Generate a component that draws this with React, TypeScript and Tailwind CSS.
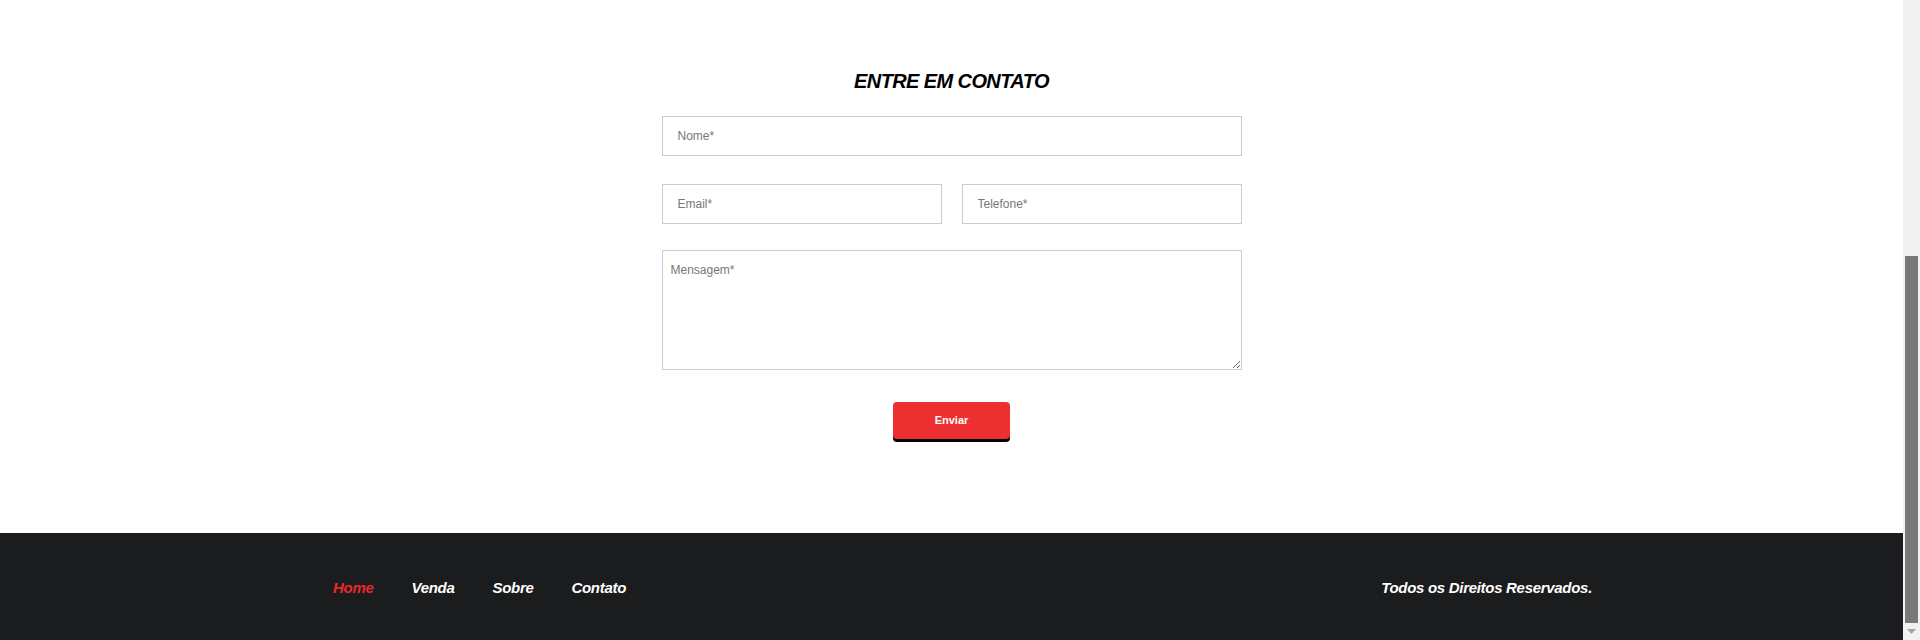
const narrow = "font-['Liberation_Sans_Narrow','Liberation_Sans',Arial,sans-serif]";

const navLinks = [
  { label: 'Home', active: true },
  { label: 'Venda', active: false },
  { label: 'Sobre', active: false },
  { label: 'Contato', active: false },
];

function ContactForm() {
  const field =
    'block w-full h-10 border border-[#cccccc] bg-white px-[15px] text-[12px] text-[#333] placeholder:text-[#777] outline-none';

  return (
    <section className="flex-1 bg-white pt-[65px]">
      <h2 className={`${narrow} text-center text-[20px] leading-8 font-bold italic tracking-[-0.6px] text-black`}>
        ENTRE EM CONTATO
      </h2>
      <form className={`${narrow} mx-auto mt-[19px] w-[580px]`} onSubmit={(e) => e.preventDefault()}>
        <input type="text" placeholder="Nome*" className={field} />
        <div className="mt-7 grid grid-cols-2 gap-5">
          <input type="email" placeholder="Email*" className={field} />
          <input type="tel" placeholder="Telefone*" className={field} />
        </div>
        <textarea
          placeholder="Mensagem*"
          className="mt-[26px] block h-[120px] w-full border border-[#cccccc] bg-white px-2 pt-[10px] text-[12px] text-[#333] placeholder:text-[#777] outline-none"
        />
        <div className="mt-8 flex justify-center">
          <button
            type="submit"
            className="h-[37px] w-[117px] rounded-[4px] bg-[#ec2f31] text-[11px] font-bold text-white shadow-[0_3px_0_#000]"
          >
            Enviar
          </button>
        </div>
      </form>
    </section>
  );
}

function Footer() {
  return (
    <footer className={`${narrow} flex h-[107px] items-center justify-between bg-[#1b1c1e] pl-[333px] pr-[311px] pt-[3px] text-[15px] font-bold italic tracking-[-0.3px]`}>
      <nav className="flex items-center gap-[38px]">
        {navLinks.map((link) => (
          <a
            key={link.label}
            href="#"
            className={link.active ? 'text-[#e62a2c]' : 'text-white'}
          >
            {link.label}
          </a>
        ))}
      </nav>
      <p className="text-white">Todos os Direitos Reservados.</p>
    </footer>
  );
}

function Scrollbar() {
  return (
    <div className="flex w-[17px] flex-col bg-[#f1f1f1]">
      <div className="h-[256px]" />
      <div className="mx-[2px] h-[367px] bg-[#787878]" />
      <div className="flex flex-1 items-center justify-center">
        <svg width="9" height="5" viewBox="0 0 9 5">
          <path d="M0 0h9L4.5 5z" fill="#a3a3a3" />
        </svg>
      </div>
    </div>
  );
}

export default function App() {
  return (
    <div className="flex h-[640px] w-full overflow-hidden bg-white">
      <div className="flex flex-1 flex-col">
        <ContactForm />
        <Footer />
      </div>
      <Scrollbar />
    </div>
  );
}
